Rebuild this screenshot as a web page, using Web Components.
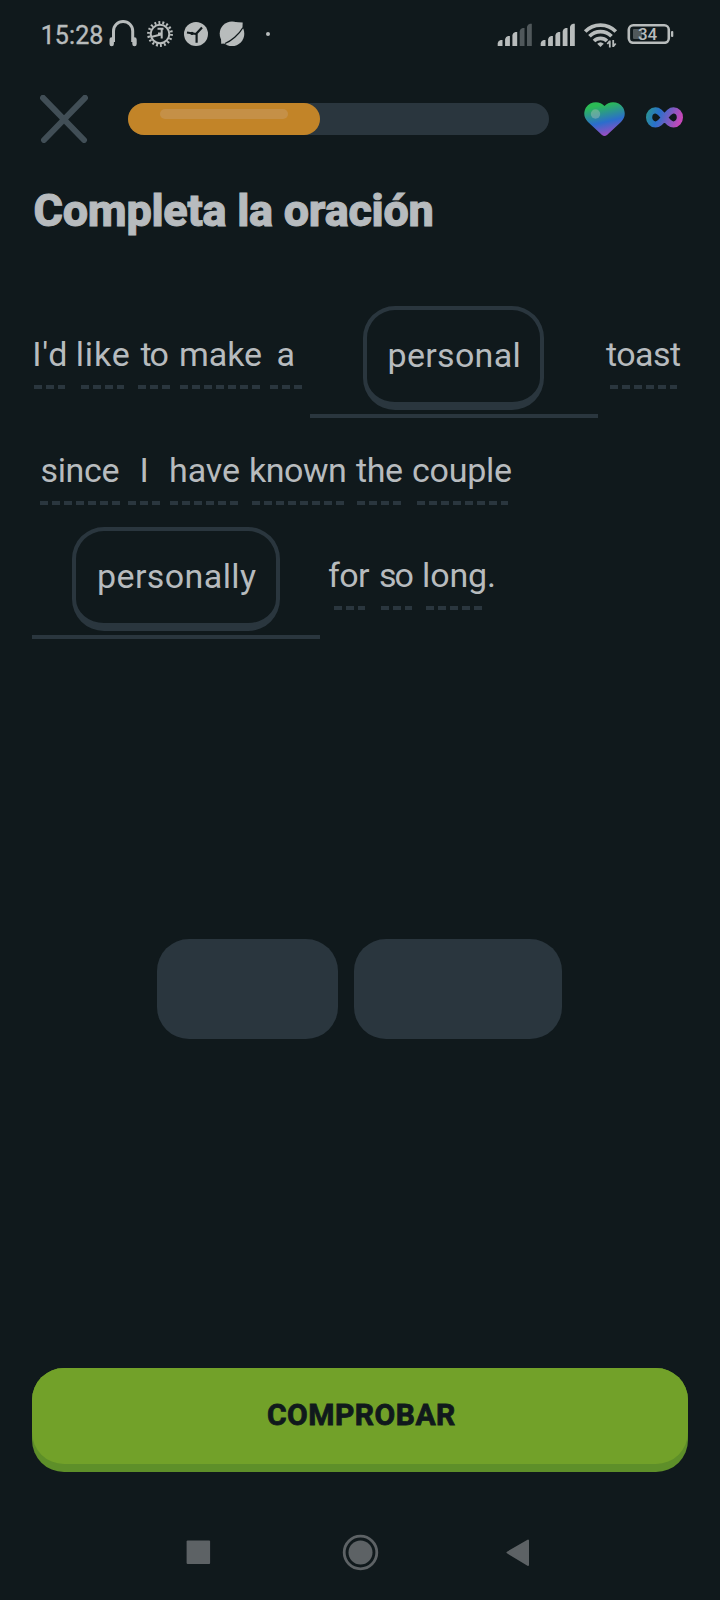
<!DOCTYPE html>
<html lang="es">
<head>
<meta charset="utf-8">
<title>Completa la oración</title>
<style>
html,body{margin:0;background:#10191c}
body{font-family:Roboto,"Liberation Sans",sans-serif}
</style>
</head>
<body>
<lesson-screen></lesson-screen>
<script>
const define = (name, html, setup) => {
  const t = document.createElement('template');
  t.innerHTML = html;
  customElements.define(name, class extends HTMLElement {
    connectedCallback() {
      if (this.shadowRoot) return;
      this.attachShadow({mode: 'open'}).appendChild(t.content.cloneNode(true));
      if (setup) setup(this, this.shadowRoot);
    }
  });
};
const ctx = document.createElement('canvas').getContext('2d');

// One run of text whose letters are spread so the ink fills the "ink" width.
define('fit-text', `<style>
:host{display:block;flex:none;white-space:pre;font-kerning:normal}
span{display:block}
</style><span></span>`, (el, root) => {
  const span = root.querySelector('span'), text = el.getAttribute('text') || '';
  const size = +el.getAttribute('size'), ink = +el.getAttribute('ink');
  const weight = el.getAttribute('weight') || 400;
  const stroke = +(el.getAttribute('stroke') || 0);
  const line = Math.round(size * .9277) + Math.round(size * .2441);
  ctx.font = `${weight} ${size}px Roboto`;
  const m = ctx.measureText(text);
  const natural = m.actualBoundingBoxRight + m.actualBoundingBoxLeft;
  const spacing = text.length > 1 ? (ink - stroke - natural) / (text.length - 1) : 0;
  const dx = +(el.getAttribute('dx') || 0);
  el.style.width = ink + 'px';
  span.style.cssText = `font:${weight} ${size}px/${line}px Roboto,"Liberation Sans",sans-serif;letter-spacing:${spacing}px;margin-left:${m.actualBoundingBoxLeft + stroke / 2 + dx}px;-webkit-text-stroke:${stroke}px currentColor`;
  span.textContent = text;
});

define('hint-word', `<style>
:host{display:grid;justify-items:center;align-content:start;flex:none;row-gap:11px}
i{display:block;height:4px;background:repeating-linear-gradient(90deg,#2a363e 0 8px,transparent 8px 12px)}
</style><i></i>`, (el, root) => {
  const i = root.querySelector('i');
  const n = document.createElement('fit-text');
  n.setAttribute('size', '34');
  for (const a of ['text', 'ink', 'dx']) if (el.hasAttribute(a)) n.setAttribute(a, el.getAttribute(a));
  i.before(n);
  i.style.width = el.getAttribute('dash') + 'px';
  i.style.marginRight = (el.getAttribute('trim') || 0) + 'px';
  el.style.marginLeft = (el.getAttribute('gap') || 0) + 'px';
});

define('word-slot', `<style>
:host{display:flex;justify-content:center;box-sizing:border-box;flex:none;width:288px;height:112px;border-bottom:4px solid #2a363e}
div{box-sizing:border-box;height:104px;border:4px solid #2a363e;border-bottom-width:8px;border-radius:32px;display:flex;justify-content:center;padding-top:25px}
</style><div><slot></slot></div>`, (el, root) => {
  const chip = +el.getAttribute('chip'), d = root.querySelector('div');
  d.style.width = chip + 'px';
  if (chip % 2) d.style.marginRight = '1px';
});

define('status-bar', `<style>
:host{display:flex;height:68px;color:#b8bcbc}
.l{display:flex;flex:1;padding:21px 0 0 43px}
svg{display:block;flex:none}
.b{display:grid;width:48px;height:20px;margin:24px 46px 0 0}
.b>*{grid-area:1/1}
.b fit-text{margin:0 0 0 12px}
.ic{margin:-21px 0 0 4px}
</style>
<div class="l"><fit-text text="15:28" size="25" ink="60" weight="400" stroke=".4" dx="-.5"></fit-text>
<svg class="ic" width="170" height="68" viewBox="107 0 170 68" fill="none" stroke="#b8bcbc">
<path d="M113.500 42V31a9.600 9.600 0 0 1 19.200 0V42" stroke-width="3"/>
<path d="M111.700 39.500v4.500M134.500 39.500v4.500" stroke-width="4.400" stroke-linecap="round"/>
<circle cx="160" cy="34" r="9.300" stroke-width="2"/>
<circle cx="160" cy="34" r="11.500" stroke-width="2.800" stroke-dasharray="1.900 2.115"/>
<path d="M157.500 28.700h6M161.700 29v9.500M151 37l10-2.500M158 33.500h3" stroke-width="2"/>
<circle cx="196" cy="34" r="12" fill="#b8bcbc" stroke="none"/>
<path d="M187 32.500l9 1.500M196 34l6-6.500M196.600 34v8.700" stroke="#10191c" stroke-width="2.200"/><circle cx="192" cy="33.400" r="1.600" fill="#10191c" stroke="none"/>
<g fill="#b8bcbc" stroke="none"><circle cx="232" cy="33.800" r="12.300"/><path d="M234 22l8.700.600-.4 8zM221 34l.2 9.700 8-.5z"/></g>
<path d="M225 43.500c6-2.500 14-9 18-16" stroke="#10191c" stroke-width="1.300"/>
<circle cx="268" cy="34" r="2" fill="#b8bcbc" stroke="none"/>
</svg></div>
<svg width="130" height="68" viewBox="496 0 130 68" fill="#b8bcbc">
<path d="M497.700 46v-3q.6-2.600 3-3h1.800V46zM505.100 46v-7q.6-2.600 3-3h1.800V46zM512.400 46v-11q.6-2.600 3-3h1.800V46z"/>
<path d="M519.700 46v-15q.6-2.600 3-3h1.800V46zM527 46v-19.300q.6-2.600 3-3h1.800V46z" fill="#50585b"/>
<path d="M540.700 46v-3q.6-2.600 3-3h1.800V46zM548.100 46v-7q.6-2.600 3-3h1.800V46zM555.400 46v-11q.6-2.600 3-3h1.800V46zM562.700 46v-15q.6-2.600 3-3h1.800V46zM570 46v-19.300q.6-2.600 3-3h1.800V46z"/>
<g fill="none" stroke="#b8bcbc" stroke-width="3.700"><path d="M585.200 31.500a21.500 21.500 0 0 1 30.600 0M589.500 36.300a15.500 15.500 0 0 1 22 0M594 41a9.300 9.300 0 0 1 13 0"/></g>
<path d="M597.200 43.700q3.300-3 6.600 0L600.500 47z"/><path d="M609.800 40.500v7M609.800 41l-2.500 3M613.200 40v7M613.200 46.500l2.500-3" stroke="#b8bcbc" stroke-width="1.800" fill="none"/>
</svg>
<div class="b"><svg width="48" height="20"><rect x="2.800" y="1.300" width="40" height="17.500" rx="4.500" fill="none" stroke="#b8bcbc" stroke-width="2.600"/><rect x="7" y="5" width="9" height="10" rx="1" fill="#50585b"/><rect x="45" y="7" width="2.300" height="6" rx="1" fill="#b8bcbc"/></svg><fit-text text="34" size="17" ink="19.500" weight="500"></fit-text></div>`);

define('lesson-header', `<style>
:host{display:flex;align-items:center;padding:0 36px 0 40px;box-sizing:border-box;height:102px}
svg{display:block;flex:none}
.bar{width:421px;height:32px;border-radius:16px;background:#2a363e;margin-left:40px}
.fill{width:192px;height:32px;box-sizing:border-box;border-radius:16px;background:#c28428;padding:6px 32px 0}
.shine{height:10px;border-radius:5px;background:#c59047}
</style>
<svg width="48" height="48" viewBox="40 96 48 48" stroke="#414e56" stroke-width="6" stroke-linecap="round"><path d="M43 98.800 84 141M85 98.800 44 141"/></svg>
<div class="bar"><div class="fill"><div class="shine"></div></div></div>
<svg width="41" height="34" viewBox="0 0 41 34" style="margin-left:35px"><defs><linearGradient id="h" x1=".3" y1="0" x2=".58" y2="1"><stop offset=".1" stop-color="#2bbb55"/><stop offset=".6" stop-color="#2b6dcc"/><stop offset="1" stop-color="#a44ac2"/></linearGradient></defs><path d="M20.500 4C16-1.500 6-1 2 5.500-1 11 0 16 4 20L18 33q2.500 2 5 0L37 20c4-4 5-9 2-14.500C35-1 25-1.500 20.500 4Z" fill="url(#h)"/><circle cx="11.500" cy="12" r="4.700" fill="#b8c5bd" opacity=".4"/></svg>
<svg width="38" height="21" viewBox="0 0 38 21" style="margin:-3px 0 0 20.500px"><defs><linearGradient id="i" x1="0" y1="0" x2="38" y2="14" gradientUnits="userSpaceOnUse"><stop offset="0" stop-color="#2a9a88"/><stop offset=".35" stop-color="#2870cb"/><stop offset=".9" stop-color="#c548b9"/></linearGradient></defs><path d="M18.500 10.500C14.500 5.500 12.500 3.300 9.500 3.300a6.300 7 0 0 0 0 14.200c3 0 5-2 9-7s6-7.200 9-7.200a6.300 7 0 0 1 0 14.200c-3 0-5-2-9-7Z" fill="none" stroke="url(#i)" stroke-width="6.200"/></svg>`);

define('cloze-sentence', `<style>
:host{display:block;height:334px}
.row{display:flex}
.one{padding-left:34px;height:144px}
.one hint-word{padding-top:28px}
.two{padding-left:40px;height:77px}
.three{padding-left:32px}
.three hint-word{padding-top:28px}
</style>
<div class="row one">
<hint-word text="I'd" ink="30" dash="31" dx=".7"></hint-word><hint-word text="like" ink="51" dash="43" gap="12" dx=".7"></hint-word><hint-word text="to" ink="27" dash="32" gap="10"></hint-word><hint-word text="make" ink="80" dash="80" gap="10" dx="1"></hint-word><hint-word text="a" ink="15" dash="32" gap="10" dx="-1"></hint-word>
<word-slot chip="181" style="margin-left:8px"><fit-text text="personal" size="34" ink="129" dx=".5"></fit-text></word-slot>
<hint-word text="toast" ink="74" dash="67" gap="8"></hint-word></div>
<div class="row two">
<hint-word text="since" ink="77" dash="80"></hint-word><hint-word text="I" ink="3" dash="32" gap="8"></hint-word><hint-word text="have" ink="68" dash="68" gap="10" dx="1"></hint-word><hint-word text="known" ink="94" dash="92" gap="13"></hint-word><hint-word text="the" ink="46" dash="44" gap="11"></hint-word><hint-word text="couple" ink="98" dash="91" gap="11"></hint-word></div>
<div class="row three">
<word-slot chip="208"><fit-text text="personally" size="34" ink="157" dx="1.500"></fit-text></word-slot>
<hint-word text="for" ink="41" dash="31" gap="9"></hint-word><hint-word text="so" ink="32.500" dash="31" gap="10"></hint-word><hint-word text="long." ink="70" dash="56" gap="11" dx=".5" trim="9"></hint-word></div>`);

define('word-bank', `<style>
:host{display:flex;gap:16px;padding-left:157px;height:100px}
div{border-radius:32px;background:#2a363e;width:181px}
div+div{width:208px}
</style><div></div><div></div>`);

define('check-button', `<style>
:host{display:flex;justify-content:center;box-sizing:border-box;margin:0 32px;height:104px;border-radius:32px;background:#5e8f29;padding-bottom:8px;color:#10191c}
button{all:unset;display:flex;justify-content:center;width:100%;height:96px;border-radius:32px;background:#72a129}
fit-text{margin:29px 0 0 3px}
</style><button><fit-text text="COMPROBAR" size="30" ink="188" weight="700" stroke=".8"></fit-text></button>`);

define('nav-bar', `<style>:host{display:block}svg{display:block}</style>
<svg width="720" height="128" viewBox="0 1472 720 128" fill="#5d6265"><rect x="186.600" y="1540.500" width="23.500" height="23.500" rx="1"/><circle cx="360.500" cy="1552.500" r="12"/><circle cx="360.500" cy="1552.500" r="16.300" fill="none" stroke="#5d6265" stroke-width="2.800"/><path d="M507.500 1552.500 528 1540.500v24.500Z" stroke="#5d6265" stroke-width="2" stroke-linejoin="round"/></svg>`);

define('lesson-screen', `<style>
:host{display:flex;flex-direction:column;width:720px;height:1600px;overflow:hidden;background:#10191c;color:#b7bbbe}
.title{height:136px;padding:14px 0 0 34px;box-sizing:border-box}
word-bank{margin-top:299px}
check-button{margin-top:329px}
</style>
<status-bar></status-bar>
<lesson-header></lesson-header>
<div class="title"><fit-text text="Completa la oración" size="45" ink="399" weight="800" stroke="1"></fit-text></div>
<cloze-sentence></cloze-sentence>
<word-bank></word-bank>
<check-button></check-button>
<nav-bar></nav-bar>`);
</script>
</body>
</html>
